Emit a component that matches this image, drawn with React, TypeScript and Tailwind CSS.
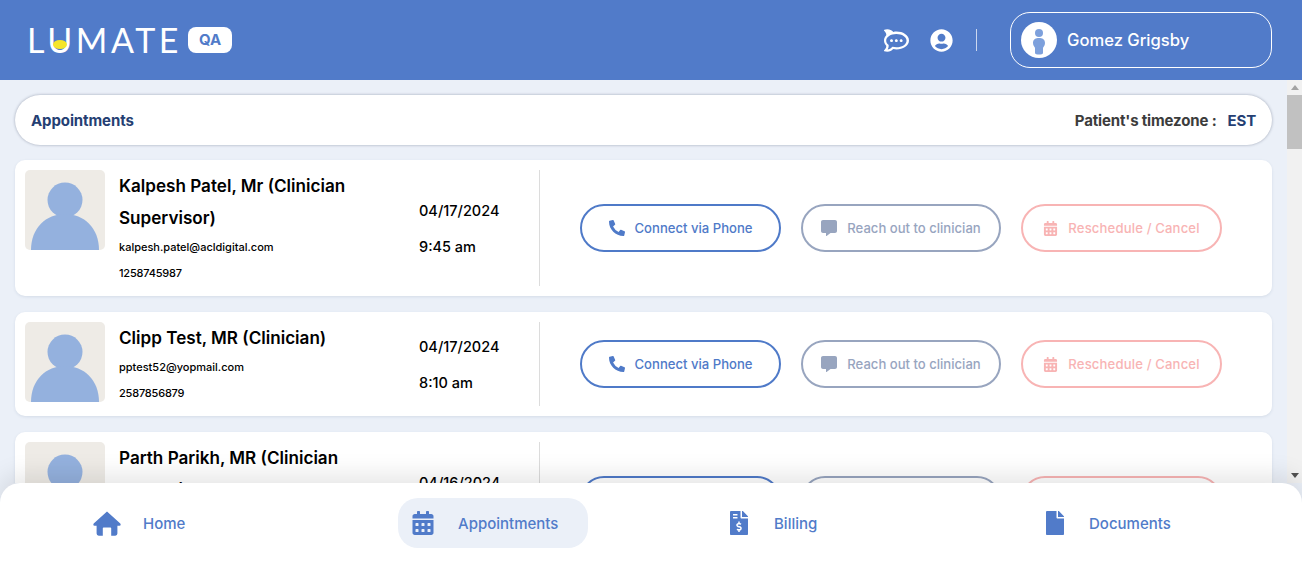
import { FaCalendarAlt, FaFileInvoiceDollar, FaFile, FaPhoneAlt, FaCommentAlt, FaUserCircle } from "react-icons/fa";
import { SiRocketdotchat } from "react-icons/si";

type Appt = { name: string; email: string; phone: string; date: string; time: string };

const appts: Appt[] = [
  { name: "Kalpesh Patel, Mr (Clinician Supervisor)", email: "kalpesh.patel@acldigital.com", phone: "1258745987", date: "04/17/2024", time: "9:45 am" },
  { name: "Clipp Test, MR (Clinician)", email: "pptest52@yopmail.com", phone: "2587856879", date: "04/17/2024", time: "8:10 am" },
  { name: "Parth Parikh, MR (Clinician Supervisor)", email: "parth.parikh@acldigital.com", phone: "1258745987", date: "04/16/2024", time: "4:30 pm" },
];

function Avatar() {
  return (
    <svg viewBox="0 0 80 80" className="h-20 w-20 shrink-0 rounded-[5px] bg-[#eeebe6]">
      <circle cx="40" cy="30" r="17.5" fill="#94b1de" />
      <path d="M6 80 C6 58 21 44 40 44 C59 44 74 58 74 80 Z" fill="#94b1de" />
    </svg>
  );
}

function HomeIcon() {
  return (
    <svg viewBox="0 0 28 25" className="h-[25px] w-[28px]" fill="#517bc9">
      <path d="M14 0.5 L27.3 12.6 Q28.4 14.6 26.4 14.8 H24.4 V22.6 Q24.4 24.7 22.3 24.7 H18.2 V17.2 Q18.2 16.4 17.4 16.4 H10.6 Q9.8 16.4 9.8 17.2 V24.7 H5.7 Q3.6 24.7 3.6 22.6 V14.8 H1.6 Q-0.4 14.6 0.7 12.6 Z" />
    </svg>
  );
}

function Card({ a }: { a: Appt }) {
  return (
    <div className="flex rounded-[10px] bg-white p-[10px] shadow-[0_1px_3px_rgba(60,80,120,0.12)]">
      <Avatar />
      <div className="w-[314px] shrink-0 pl-[14px] pr-[50px]">
        <div className="text-[17.1px] font-semibold leading-8 text-black">{a.name}</div>
        <div className="text-[11px] font-medium leading-[26px] text-black">{a.email}</div>
        <div className="text-[11px] font-medium leading-[26px] tracking-[-0.2px] text-black">{a.phone}</div>
      </div>
      <div className="flex w-[120px] shrink-0 flex-col justify-center pt-[2px] text-[14.5px] font-medium leading-9 text-black">
        <div>{a.date}</div>
        <div>{a.time}</div>
      </div>
      <div className="w-px shrink-0 bg-[#dcdcdc]" />
      <div className="flex items-center pl-10">
        <button className="flex h-12 w-[201px] items-center justify-center gap-[10px] rounded-3xl border-2 border-[#4f7ac8] text-[13.1px] font-medium text-[#4f7ac8]">
          <FaPhoneAlt className="text-[16px]" />
          <span className="pt-[2px]">Connect via Phone</span>
        </button>
        <button className="ml-5 flex h-12 w-[200px] items-center justify-center gap-[10px] rounded-3xl border-2 border-[#98a5bf] text-[13.1px] font-medium text-[#98a5bf]">
          <FaCommentAlt className="text-[16px]" />
          <span className="pt-[2px]">Reach out to clinician</span>
        </button>
        <button className="ml-5 flex h-12 w-[201px] items-center justify-center gap-[10px] rounded-3xl border-2 border-[#f8b4b4] text-[13.1px] font-medium tracking-[0.15px] text-[#f8b4b4]">
          <FaCalendarAlt className="text-[15px]" />
          <span className="pt-[2px]">Reschedule / Cancel</span>
        </button>
      </div>
    </div>
  );
}

const nav = [
  { label: "Home", icon: <HomeIcon />, pad: "pl-[11px]" },
  { label: "Appointments", icon: <FaCalendarAlt className="text-[24px] text-[#517bc9]" />, pad: "pl-[10px]", active: true },
  { label: "Billing", icon: <FaFileInvoiceDollar className="text-[24px] text-[#517bc9]" />, pad: "pl-[10px]" },
  { label: "Documents", icon: <FaFile className="text-[24px] text-[#517bc9]" />, pad: "pl-[9px]" },
];

export default function App() {
  return (
    <div className="flex h-[563px] w-[1302px] flex-col overflow-hidden bg-[#ebf0f8] font-['Inter',sans-serif]">
      <header className="flex h-20 shrink-0 items-center bg-[#517bc9] px-[30px]">
        <div className="relative -ml-[3px] font-['Lato',sans-serif] text-[34px] font-normal leading-none tracking-[3.6px] text-white">
          LUMATE
          <span className="absolute left-[26px] top-[17px] h-[9px] w-[14px] rounded-[50%] bg-[#f5e52a]" />
        </div>
        <div className="ml-[6px] flex h-[26px] w-11 items-center justify-center rounded-lg bg-white text-[15px] font-bold text-[#517bc9]">QA</div>
        <div className="ml-auto flex items-center">
          <SiRocketdotchat className="text-[25px] text-white" />
          <FaUserCircle className="ml-[21px] text-[23px] text-white" />
          <div className="ml-[23px] h-[22px] w-px bg-white/70" />
          <div className="ml-[33px] flex h-14 w-[262px] items-center rounded-[20px] border border-white pl-[10px]">
            <svg viewBox="0 0 36 36" className="h-9 w-9 rounded-full bg-white">
              <circle cx="18" cy="11" r="4" fill="#7da0dc" />
              <path d="M12 21 C12 17 15 16 18 16 C21 16 24 17 24 21 C24 24 22 25 22 26 L22 31 C22 33 14 33 14 31 L14 26 C14 25 12 24 12 21Z" fill="#7da0dc" />
            </svg>
            <span className="ml-[10px] text-[16.6px] font-medium text-white">Gomez Grigsby</span>
          </div>
        </div>
      </header>

      <div className="flex min-h-0 flex-1">
        <main className="min-w-0 flex-1 overflow-hidden px-[15px] pt-[15px]">
          <div className="flex h-[50px] items-center justify-between rounded-[25px] bg-white px-4 pt-[2px] shadow-[0_0_3px_rgba(40,50,80,0.4)]">
            <h1 className="text-[15px] font-bold tracking-[-0.1px] text-[#253f73]">Appointments</h1>
            <div className="text-[15px] font-bold tracking-[-0.15px] text-[#3c3c3c]">
              Patient's timezone :<span className="ml-[11px] text-[#253f73]">EST</span>
            </div>
          </div>
          <div className="mt-[15px] flex flex-col gap-4">
            {appts.map((a, i) => (
              <Card key={i} a={a} />
            ))}
          </div>
        </main>
        <div className="flex w-[15px] shrink-0 flex-col items-center bg-[#f1f1f1]">
          <div className="flex h-[15px] items-center justify-center">
            <span className="h-0 w-0 border-x-[4px] border-b-[5px] border-x-transparent border-b-[#a3a3a3]" />
          </div>
          <div className="h-[54px] w-full bg-[#c1c1c1]" />
          <div className="mt-auto flex h-[15px] items-center justify-center">
            <span className="h-0 w-0 border-x-[4px] border-t-[5px] border-x-transparent border-t-[#505050]" />
          </div>
        </div>
      </div>

      <nav className="relative z-10 grid h-20 shrink-0 grid-cols-[repeat(4,316px)] items-center rounded-t-[20px] bg-white pl-[82px] shadow-[0_-8px_24px_rgba(0,0,0,0.1)]">
        {nav.map(({ label, icon, pad, active }) => (
          <div key={label} className={`flex h-[50px] w-[190px] items-center rounded-[20px] ${active ? "bg-[#ebf0f8]" : ""}`}>
            <div className="flex w-[50px] justify-center">{icon}</div>
            <span className={`${pad} pt-[2px] text-[15px] font-medium text-[#517bc9]`}>{label}</span>
          </div>
        ))}
      </nav>
    </div>
  );
}
